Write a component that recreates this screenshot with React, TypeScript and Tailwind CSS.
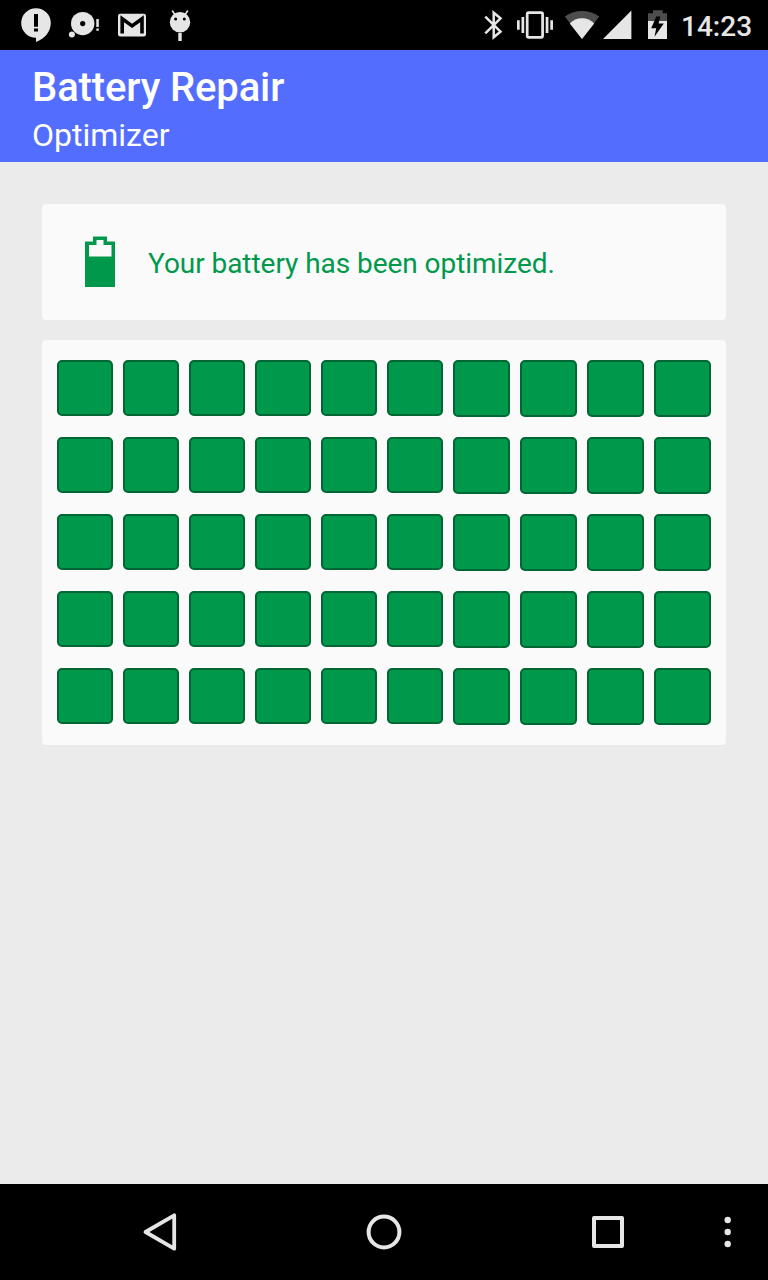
const cells = Array.from({ length: 50 }, (_, i) => i);

function StatusBar() {
  return (
    <div className="flex h-[50px] shrink-0 items-center bg-black pl-3 text-[#e6e6e6]">
      {/* Notifications */}
      <svg className="h-[50px] w-12" viewBox="12 0 48 50" fill="currentColor">
        <path d="M36 8.200a14.800 14.800 0 0 1 14.800 14.800C50.800 31.500 45 38.500 36 42V37.800A14.800 14.800 0 0 1 36 8.200z" />
        <path d="M34 14h4v12.800h-4zM34 28.400h4v3h-4z" fill="#000" />
      </svg>
      <svg className="h-[50px] w-12" viewBox="60 0 48 50" fill="currentColor">
        <circle cx="82.700" cy="23.600" r="11.700" />
        <circle cx="82.700" cy="23.600" r="2.600" fill="#000" />
        <circle cx="71.900" cy="34.400" r="3" />
        <path d="M96.300 19h2.500v8h-2.500zM96.300 28.400h2.500v2.300h-2.500z" />
      </svg>
      <svg className="h-[50px] w-12" viewBox="108 0 48 50" fill="currentColor">
        <rect x="118" y="13.800" width="28" height="22.600" rx="2.200" />
        <path d="M122.200 33.500V18.800l9.900 7.100 9.900-7.100v14.700" fill="none" stroke="#000" strokeWidth="3.600" />
      </svg>
      <svg className="h-[50px] w-12" viewBox="156 0 48 50" fill="currentColor">
        <circle cx="180" cy="22.200" r="10.200" />
        <path d="M174.800 14.500l-2.600-4M185.200 14.500l2.600-4" stroke="currentColor" strokeWidth="1.500" />
        <circle cx="175.600" cy="19" r="1.500" fill="#000" />
        <circle cx="184.300" cy="19" r="1.500" fill="#000" />
        <path d="M178.300 33h3.400v8h-3.400z" />
      </svg>

      {/* System */}
      <svg className="ml-auto h-[50px] w-8" viewBox="477 0 32 50" fill="none" stroke="currentColor" strokeWidth="2.500">
        <path d="M485.300 16.700L500.500 31.600 493.700 37.300V12.700L500.500 18.400 485.300 33.300" />
      </svg>
      <svg className="ml-0.5 h-[50px] w-12" viewBox="511 0 48 50" fill="currentColor">
        <rect x="527.200" y="12.700" width="15.400" height="24.600" rx="1.500" fill="none" stroke="currentColor" strokeWidth="2.700" />
        <path d="M521.500 17h2.700v16h-2.700zM517 20.300h2.700v9.400H517zM545.700 17h2.700v16h-2.700zM550.300 20.300h2.700v9.400h-2.700z" />
      </svg>
      <svg className="ml-1 h-[50px] w-[38px]" viewBox="563 0 38 50" fill="currentColor">
        <path d="M582 39L564.800 16.500C569.500 13 575.500 11 582 11s12.500 2 17.200 5.500z" fill="#4d4d4d" />
        <path d="M582 39l-12.200-15.600C573.200 20.200 577.300 18.300 582 18.300s8.800 1.900 12.200 5.100z" />
      </svg>
      <svg className="ml-px h-[50px] w-[30px]" viewBox="602 0 30 50" fill="currentColor">
        <path d="M603 39h28.400V10.600z" />
      </svg>
      <svg className="ml-[13px] h-[50px] w-6" viewBox="645 0 24 50" fill="currentColor">
        <path d="M648 21v-7.700h5v-3h9.700v3h4.300V21z" fill="#4d4d4d" />
        <path d="M648 21h19v18h-19z" />
        <path d="M656.300 16.500h4l-1.700 7h5.200l-9.300 13.200 1.700-8.400h-5z" fill="#000" />
      </svg>
      <span className="mr-4 ml-3 w-[71px] pt-[3px] text-right text-[28px] leading-none font-medium whitespace-nowrap">14:23</span>
    </div>
  );
}

function NavBar() {
  return (
    <div className="flex h-24 shrink-0 items-center bg-black pl-12 text-[#e6e6e6]">
      <svg className="h-24 w-56" viewBox="48 1184 224 96" fill="none" stroke="currentColor" strokeWidth="3.800" strokeLinejoin="round">
        <path d="M174.200 1215.300v33.400L145.500 1232z" />
      </svg>
      <svg className="h-24 w-56" viewBox="272 1184 224 96" fill="none" stroke="currentColor" strokeWidth="4">
        <circle cx="384" cy="1232" r="15.400" />
      </svg>
      <svg className="h-24 w-48" viewBox="496 1184 192 96" fill="none" stroke="currentColor" strokeWidth="4" strokeLinejoin="round">
        <rect x="594" y="1218" width="28" height="28" />
      </svg>
      <svg className="h-24 w-20" viewBox="688 1184 80 96" fill="currentColor">
        <circle cx="727.700" cy="1220" r="3.200" />
        <circle cx="727.700" cy="1232" r="3.200" />
        <circle cx="727.700" cy="1244" r="3.200" />
      </svg>
    </div>
  );
}

export default function App() {
  return (
    <div className="flex h-[1280px] w-[768px] flex-col overflow-hidden bg-[#ebebeb] font-['Roboto',sans-serif]">
      <StatusBar />

      <header className="h-28 shrink-0 bg-[#536dfe] px-8 pt-3.5 text-white">
        <h1 className="text-[40px] leading-[47px] font-medium tracking-[-0.12px] whitespace-nowrap">Battery Repair</h1>
        <p className="text-[32px] leading-[48px] whitespace-nowrap">Optimizer</p>
      </header>

      <main className="flex grow flex-col gap-5 px-[42px] pt-[42px]">
        <section className="flex h-[116px] items-center rounded-[4px] bg-[#fafafa] pl-[43px]">
          <svg className="h-[52px] w-[30px]" viewBox="0 0 30 52" fill="#00994c">
            <path fillRule="evenodd" d="M0 5.500h8V.5h14v5h8V51H0zM4 9v11.500h22.500V9H18.500V4h-7v5z" />
          </svg>
          <p className="ml-[33px] pt-1 text-[28px] leading-8 tracking-[-0.05px] whitespace-nowrap text-[#00994c]">Your battery has been optimized.</p>
        </section>

        <section className="grid h-[405px] grid-cols-[repeat(6,56px)_repeat(4,57px)] content-start gap-x-2.5 rounded-[4px] bg-[#fafafa] px-[15px] pt-5">
          {cells.map((i) => (
            <div key={i} className="mb-5 flex h-[57px]">
              <div className={`w-full rounded-[5px] border-2 border-[#006633] bg-[#00994c] ${i % 10 < 6 ? 'h-14' : 'h-[57px]'}`} />
            </div>
          ))}
        </section>
      </main>

      <NavBar />
    </div>
  );
}
